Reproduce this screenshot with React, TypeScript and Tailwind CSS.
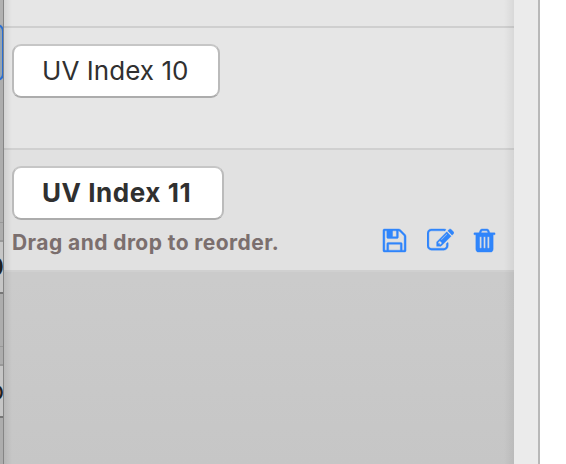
import type { ReactNode } from "react";

const SAVE =
  "M512 1536h768v-384h-768v384zm896 0h128v-896q0-14-10-38.5t-20-34.5l-281-281q-10-10-34-20t-39-10v416q0 40-28 68t-68 28h-576q-40 0-68-28t-28-68v-416h-128v1280h128v-416q0-40 28-68t68-28h832q40 0 68 28t28 68v416zm-384-928v-320q0-13-9.5-22.5t-22.5-9.5h-192q-13 0-22.5 9.5t-9.5 22.5v320q0 13 9.5 22.5t22.5 9.5h192q13 0 22.5-9.5t9.5-22.5zm640 32v928q0 40-28 68t-68 28h-1344q-40 0-68-28t-28-68v-1344q0-40 28-68t68-28h928q40 0 88 20t76 48l280 280q28 28 48 76t20 88z";
const EDIT =
  "M888 1184l116-116-152-152-116 116v56h96v96h56zm440-720q-16-16-33 1l-350 350q-17 17-1 33t33-1l350-350q17-17 1-33zm80 594v190q0 119-84.5 203.5t-203.5 84.5h-832q-119 0-203.5-84.5t-84.5-203.5v-832q0-119 84.5-203.5t203.5-84.5h832q63 0 117 25 15 7 18 23 3 17-9 29l-49 49q-14 14-32 8-23-6-45-6h-832q-66 0-113 47t-47 113v832q0 66 47 113t113 47h832q66 0 113-47t47-113v-126q0-13 9-22l64-64q15-15 35-7t20 29zm-96-738l288 288-672 672h-288v-288zm444 132l-92 92-288-288 92-92q28-28 68-28t68 28l152 152q28 28 28 68t-28 68z";
const TRASH =
  "M704 1376v-704q0-14-9-23t-23-9h-64q-14 0-23 9t-9 23v704q0 14 9 23t23 9h64q14 0 23-9t9-23zm256 0v-704q0-14-9-23t-23-9h-64q-14 0-23 9t-9 23v704q0 14 9 23t23 9h64q14 0 23-9t9-23zm256 0v-704q0-14-9-23t-23-9h-64q-14 0-23 9t-9 23v704q0 14 9 23t23 9h64q14 0 23-9t9-23zm-544-992h448l-48-117q-7-9-17-11h-317q-10 2-17 11zm928 32v64q0 14-9 23t-23 9h-96v948q0 83-47 143.5t-113 60.5h-832q-66 0-113-58.5t-47-141.5v-952h-96q-14 0-23-9t-9-23v-64q0-14 9-23t23-9h309l70-167q15-37 54-63t79-26h320q40 0 79 26t54 63l70 167h309q14 0 23 9t9 23z";

function Glyph({ d, label }: { d: string; label: string }) {
  return (
    <button aria-label={label} className="block">
      <svg
        viewBox="0 0 1792 1792"
        className="block size-[27px] fill-[#2f85fb] stroke-[#2f85fb] stroke-[24]"
      >
        <path d={d} />
      </svg>
    </button>
  );
}

function Pill({ className, children }: { className: string; children: ReactNode }) {
  return (
    <button
      className={`block h-[54px] rounded-[9px] border-2 border-x-[#bbbbbb] border-t-[#c6c6c6] border-b-[#acacac] bg-white pl-[28px] text-left text-[26px] leading-[50px] whitespace-nowrap text-[#303030] ${className}`}
    >
      {children}
    </button>
  );
}

/* Sliver of the page that shows to the left of the panel. */
function Backdrop() {
  return (
    <div className="flex h-full w-1 flex-none flex-col overflow-hidden border-r border-[#858585] bg-[#adadad]">
      <div className="h-6 flex-none bg-[#b1b1b1]" />
      <div className="h-[57px] w-[7px] flex-none -translate-x-[3px] rounded-r-[9px] border-2 border-l-0 border-[#2c6fd0] bg-[#96a4b1]" />
      <div className="h-[141px] flex-none" />
      <div className="h-[18px] flex-none border-t border-[#999999]" />
      <div className="relative h-[54px] flex-none overflow-hidden border-y-2 border-t-[#999999] border-b-[#777777] bg-[#c6c6c6]">
        <span className="absolute top-[7px] right-[-1px] text-[26px] leading-[36px] font-semibold text-[#202020]">0</span>
      </div>
      <div className="h-[52px] flex-none" />
      <div className="h-[18px] flex-none border-t border-[#999999]" />
      <div className="relative h-[54px] flex-none overflow-hidden border-y-2 border-t-[#999999] border-b-[#777777] bg-[#c6c6c6]">
        <span className="absolute top-[7px] right-[-1px] text-[26px] leading-[36px] text-[#202020]">o</span>
      </div>
    </div>
  );
}

export default function App() {
  return (
    <div className="flex h-[464px] w-[566px] overflow-hidden bg-white font-['Inter',sans-serif]">
      <Backdrop />
      <main className="relative flex w-[510px] flex-none flex-col bg-linear-to-b from-[#cbcbcb] from-60% to-[#c6c6c6]">
        <div className="h-[26px] flex-none bg-[#e6e6e6]" />
        <section className="h-[122px] flex-none border-t-2 border-[#cfcfcf] bg-[#e6e6e6] pt-4 pl-2">
          <Pill className="w-[208px] tracking-[0.05px]">UV Index 10</Pill>
        </section>
        <section className="h-[124px] flex-none border-y-2 border-[#d0d0d0] bg-[#e1e1e1] pt-4 pl-2">
          <Pill className="w-[212px] font-bold tracking-[0.55px]">UV Index 11</Pill>
          <div className="flex items-start pt-[7px]">
            <p className="w-[369px] text-[21px] leading-[32px] font-bold tracking-[0.43px] whitespace-nowrap text-[#7b6f6e]">
              Drag and drop to reorder.
            </p>
            <div className="flex">
              <Glyph d={SAVE} label="Save" />
              <div className="w-[19px]" />
              <Glyph d={EDIT} label="Edit" />
              <div className="w-[16.5px]" />
              <Glyph d={TRASH} label="Delete" />
            </div>
          </div>
        </section>
        <div className="pointer-events-none absolute inset-y-0 left-0 w-2 bg-linear-to-r from-black/8 to-transparent" />
        <div className="pointer-events-none absolute inset-y-0 right-0 w-2.5 bg-linear-to-l from-black/6 to-transparent" />
      </main>
      <div className="w-[26px] flex-none border-r-2 border-[#b8b8b8] bg-[#ebebeb]" />
    </div>
  );
}
